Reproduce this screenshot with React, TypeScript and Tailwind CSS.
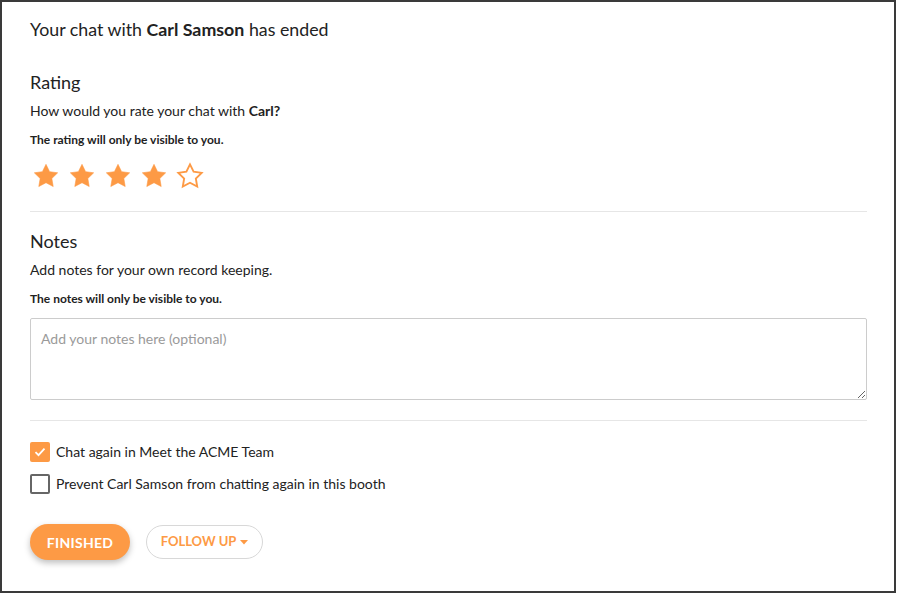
import React from "react";

const STAR = "M12 2l3.09 6.26L22 9.27l-5 4.87 1.18 6.88L12 17.77l-6.18 3.25L7 14.14 2 9.27l6.91-1.01L12 2z";

function Star({ filled }: { filled: boolean }) {
  return (
    <svg width="28" height="28" viewBox="0 0 24 24">
      <path
        d={STAR}
        fill={filled ? "#fd9a45" : "none"}
        stroke="#fd9a45"
        strokeWidth={filled ? 0.5 : 1.6}
        strokeLinejoin="miter"
      />
    </svg>
  );
}

export default function App() {
  return (
    <div className="w-[897px] h-[594px] bg-white font-['Lato',sans-serif] text-[#222]">
      <div className="w-[896px] h-[593px] border-2 border-[#3a3a3a] pl-[28px] pr-[27px] pt-[14px] box-border">
        <h1 className="text-[17.8px] leading-[26px]">
          Your chat with <span className="font-bold">Carl Samson</span> has ended
        </h1>

        <h2 className="mt-[27px] text-[18px] leading-[26px]">Rating</h2>
        <p className="mt-[6px] text-[14px] leading-[20px]">
          How would you rate your chat with <span className="font-bold">Carl?</span>
        </p>
        <p className="mt-[11px] text-[12px] leading-[16px] font-bold">The rating will only be visible to you.</p>
        <div className="mt-[14px] flex gap-[8px] ml-[2px]">
          <Star filled />
          <Star filled />
          <Star filled />
          <Star filled />
          <Star filled={false} />
        </div>

        <div className="mt-[21px] h-px bg-[#e6e6e6]" />

        <h2 className="mt-[16px] text-[18px] leading-[26px]">Notes</h2>
        <p className="mt-[6px] text-[14px] leading-[20px]">Add notes for your own record keeping.</p>
        <p className="mt-[11px] text-[12px] leading-[16px] font-bold">The notes will only be visible to you.</p>
        <textarea
          className="mt-[11px] block w-full h-[82px] border border-[#cccccc] rounded-[2px] px-[10px] py-[10px] text-[14px] leading-[20px] placeholder:text-[#9a9a9a] outline-none"
          placeholder="Add your notes here (optional)"
        />

        <div className="mt-[20px] h-px bg-[#e6e6e6]" />

        <div className="mt-[21px] flex items-center gap-[6px]">
          <span className="w-[20px] h-[20px] rounded-[2px] bg-[#fd9a45] flex items-center justify-center">
            <svg width="14" height="14" viewBox="0 0 14 14">
              <path d="M2.5 7.2l3 3 6-6.5" fill="none" stroke="white" strokeWidth="1.8" />
            </svg>
          </span>
          <span className="text-[14px] leading-[20px]">Chat again in Meet the ACME Team</span>
        </div>
        <div className="mt-[12px] flex items-center gap-[6px]">
          <span className="w-[20px] h-[20px] rounded-[2px] border-2 border-[#666] box-border" />
          <span className="text-[14px] leading-[20px]">Prevent Carl Samson from chatting again in this booth</span>
        </div>

        <div className="mt-[30px] flex items-center gap-[16px]">
          <button className="w-[100px] h-[36px] rounded-full bg-[#fd9a45] text-white font-bold text-[14px] tracking-[0.3px] shadow-[0_3px_6px_rgba(0,0,0,0.25)]">
            FINISHED
          </button>
          <button className="w-[117px] h-[34px] rounded-full border border-[#d8d8d8] text-[#fd9a45] font-bold text-[13px] flex items-center justify-center gap-[4px]">
            FOLLOW UP
            <svg width="8" height="5" viewBox="0 0 8 5">
              <path d="M0 0h8L4 4.5z" fill="#fd9a45" />
            </svg>
          </button>
        </div>
      </div>
    </div>
  );
}
